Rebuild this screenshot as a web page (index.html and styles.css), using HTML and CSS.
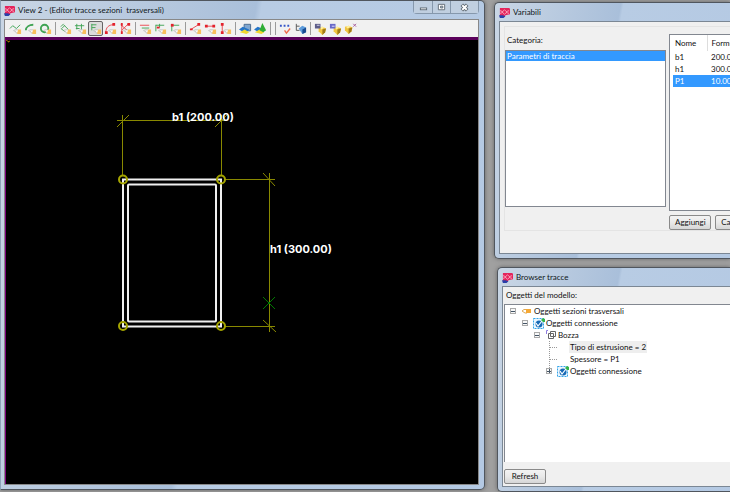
FILE: index.html
```html
<!DOCTYPE html>
<html lang="it">
<head>
<meta charset="utf-8">
<title>Editor tracce sezioni trasversali</title>
<link rel="stylesheet" href="styles.css">
</head>
<body>
<svg class="symbols" aria-hidden="true">
  <symbol id="app" viewBox="0 0 12 12">
    <path fill="#e4245b" d="M1 1h10l1 1v6l-5 1-1 2H1z"/>
    <path fill="#2a3fa8" d="M0 9h4l3 1-2 2H1z"/>
    <path fill="none" stroke="#ffc4d4" stroke-width=".8" d="M1 4l3 1 2-2 2 2 3-1M1 7l3-1 2 2 2-2 3 1M4 5v1M8 5v1"/>
  </symbol>
  <symbol id="hand" viewBox="0 0 14 14">
    <path fill="#fff" stroke="#aaa" stroke-width=".7" d="M10 8.500H6l-1 1 2 .5 1 2h2"/>
    <path fill="#f7bf5e" d="M10 8h3v5h-4v-2z"/>
  </symbol>
  <symbol id="gem" viewBox="0 0 14 14">
    <path fill="#f0c440" d="M5 6l4-1 4 2-1 4-3 3-4-4z"/>
    <path fill="#a07a18" d="M9 8l4-1-1 4-3 3z"/>
    <path fill="#fff0a0" d="M6 6l3-1 2 1-3 2z"/>
  </symbol>
  <symbol id="link" viewBox="0 0 12 12">
    <rect x=".5" y="1.500" width="10" height="10" fill="#eaf6ff" stroke="#35a5e8" stroke-dasharray="2 1"/>
    <circle cx="6" cy="7" r="3.500" fill="#1769b5"/>
    <path fill="none" stroke="#fff" stroke-width="1.200" d="M3 6l2 3 4-5"/>
    <path fill="#35b34a" d="M8 3l2-2 2 1v3l-2 0z"/>
  </symbol>
</svg>

<main class="desktop">
  <section class="window editor" aria-label="View 2">
    <header class="titlebar">
      <svg class="app-icon"><use href="#app"/></svg>
      <h1>View 2 - (Editor tracce sezioni&nbsp; trasversali)</h1>
      <div class="controls">
        <button aria-label="Riduci a icona"><svg viewBox="0 0 10 10"><rect x="1.500" y="5.500" width="7" height="2" fill="#fff" stroke="#5b6670"/></svg></button>
        <button aria-label="Ingrandisci"><svg viewBox="0 0 10 10"><path fill="#fff" fill-rule="evenodd" stroke="#5b6670" d="M1.500 1.500h7v6h-7zM4 3.500h2.500v2H4z"/></svg></button>
        <button aria-label="Chiudi"><svg viewBox="0 0 10 10"><path stroke="#5b6670" stroke-width="4" d="M2 2l6 6M8 2L2 8"/><path stroke="#fff" stroke-width="2" d="M2.500 2.500l5 5M7.500 2.500l-5 5"/></svg></button>
      </div>
    </header>
    <div class="client">
      <div class="toolbar" role="toolbar">
        <div class="group">
          <button aria-label="Polilinea"><svg viewBox="0 0 14 14"><path class="green" d="M1 7l3-3 4 3 4-4"/><use href="#hand"/></svg></button>
          <button aria-label="Arco"><svg viewBox="0 0 14 14"><path class="green thick" d="M2 9c0-4 4-6 8-6"/><use href="#hand"/></svg></button>
          <button aria-label="Cerchio"><svg viewBox="0 0 14 14"><circle class="green thick" cx="6" cy="7" r="4"/><use href="#hand"/></svg></button>
        </div>
        <div class="group">
          <button aria-label="Vincolo parallelo"><svg viewBox="0 0 14 14"><path class="green" d="M2 7l4 3M5 3l5 5M2 5l3-3M3 7l3-3"/><use href="#hand"/></svg></button>
          <button aria-label="Vincolo verticale"><svg viewBox="0 0 14 14"><path class="green" d="M3 2v6M8 2v6M1 4h10M2 7h4"/><use href="#hand"/></svg></button>
          <button class="pressed" aria-label="Vincolo orizzontale" aria-pressed="true"><svg viewBox="0 0 14 14"><path class="green" d="M3 2v7M3 3h5M3 6h4"/><use href="#hand"/></svg></button>
          <button aria-label="Raccordo"><svg viewBox="0 0 14 14"><path class="red" d="M2 11c0-5 3-8 8-8"/><path class="red-fill" d="M1 10h3v3H1zM9 1h3v3H9z"/><use href="#hand"/></svg></button>
          <button aria-label="Taglia"><svg viewBox="0 0 14 14"><path class="red" d="M3 2v10M2 3l8 7M10 2L3 9"/><path class="red-fill" d="M2 1h2v3H2zM9 1h3v3H9zM2 10h2v3H2z"/><use href="#hand"/></svg></button>
        </div>
        <div class="group">
          <button aria-label="Allinea"><svg viewBox="0 0 14 14"><path class="red" d="M1 3.500h10"/><path class="green" d="M3 6.500h8"/><use href="#hand"/></svg></button>
          <button aria-label="Perpendicolare"><svg viewBox="0 0 14 14"><path class="green" d="M2 3v7M2 3.500h9M6 6V2"/><path class="red-fill" d="M3 5h3v2H3z"/><use href="#hand"/></svg></button>
          <button aria-label="Coincidente"><svg viewBox="0 0 14 14"><path class="green" d="M3 3v7M3 3.500h8"/><path class="red-fill" d="M2 2h3v3H2z"/><use href="#hand"/></svg></button>
        </div>
        <div class="group">
          <button aria-label="Distanza libera"><svg viewBox="0 0 14 14"><path class="red" d="M2 8l8-5"/><path class="red-fill" d="M1 7h3v2H1zM9 1h3v3H9z"/><use href="#hand"/></svg></button>
          <button aria-label="Distanza orizzontale"><svg viewBox="0 0 14 14"><path class="red" d="M2 4.500h9"/><path class="red-fill" d="M1 3h3v3H1zM9 3h3v3H9z"/><use href="#hand"/></svg></button>
          <button aria-label="Distanza verticale"><svg viewBox="0 0 14 14"><path class="red" d="M3.500 3v9"/><path class="red-fill" d="M2 1h3v3H2zM2 10h3v3H2z"/><use href="#hand"/></svg></button>
        </div>
        <div class="group">
          <button aria-label="Piano"><svg viewBox="0 0 14 14"><path fill="#7fa6d0" stroke="#49698c" d="M5.500 2.500h7v7h-7z"/><path fill="#2474c8" d="M0 8l4-3 7 3-4 4z"/><path fill="#f1d72e" d="M1 11l5-3 5 3-3 2z"/></svg></button>
          <button aria-label="Solido"><svg viewBox="0 0 14 14"><path fill="#2474c8" d="M0 8l4-3 7 3-4 4z"/><path fill="#f1d72e" d="M1 11l5-3 5 3-3 2z"/><path fill="#2fae35" d="M6 9l3-8 4 8-3 2z"/></svg></button>
        </div>
        <div class="group empty"></div>
        <div class="group">
          <button aria-label="Punti"><svg viewBox="0 0 14 14"><path class="blue-fill" d="M1 3h2v2H1zM5 3h2v2H5zM9 3h2v2H9z"/><path fill="none" stroke="#ef6b4a" stroke-width="1.500" d="M6 9l2 3 4-5"/></svg></button>
          <button aria-label="Albero"><svg viewBox="0 0 14 14"><path fill="none" stroke="#555" d="M2.500 2v7H6M2.500 4.500H6"/><path fill="#5d9cdb" d="M5 7l4-3 4 2v5l-4 2z"/><path fill="#174a91" d="M9 8l4-2v5l-4 2z"/></svg></button>
        </div>
        <div class="group">
          <button aria-label="Salva"><svg viewBox="0 0 14 14"><use href="#gem"/><path fill="#5c5c88" d="M1 2h6v5H1z"/><path fill="#d8d8e8" d="M3 3h3v1H3z"/></svg></button>
          <button aria-label="Salva con nome"><svg viewBox="0 0 14 14"><use href="#gem"/><path fill="#6868c8" d="M1 2h6v5H1z"/><path fill="#e8e8ff" d="M3 4h3v1H3z"/></svg></button>
          <button aria-label="Elimina"><svg viewBox="0 0 14 14"><use href="#gem" x="-4" y="-1" width="14" height="14"/><path fill="none" stroke="#a35698" d="M10 2l3 3M13 2l-3 3"/></svg></button>
        </div>
      </div>
      <div class="viewport">
        <svg class="drawing" viewBox="6 40 340 300" width="340" height="300" role="img" aria-label="Sezione b1 per h1">
          <path class="axis" d="M6 40l3 2M10 41l-2 1"/>
          <g class="section">
            <rect x="123" y="179.500" width="98" height="147"/>
            <rect x="128" y="184.500" width="88" height="137" rx="1"/>
          </g>
          <g class="dimension">
            <path d="M117 120.500h110M122.500 115v60M221.500 115v60M225 179.500h50M225 326.500h50M269.500 173v159"/>
            <path d="M117 127l12-12M215 127l12-12M263 173l12 13M263 320l13 12"/>
          </g>
          <g class="handles">
            <circle cx="123" cy="179.500" r="4"/>
            <circle cx="221" cy="179.500" r="4"/>
            <circle cx="123" cy="326" r="4"/>
            <circle cx="221" cy="326" r="4"/>
          </g>
          <path class="origin" d="M263 297l12 12M275 297l-12 12"/>
          <text x="172" y="121">b1 (200.00)</text>
          <text x="270" y="253">h1 (300.00)</text>
        </svg>
      </div>
    </div>
  </section>

  <div class="side">
    <section class="window variables" aria-label="Variabili">
      <header class="titlebar">
        <svg class="app-icon"><use href="#app"/></svg>
        <h2>Variabili</h2>
      </header>
      <div class="client">
        <div class="panel">
          <div class="category">
            <label for="category">Categoria:</label>
            <select id="category" size="2">
              <option selected>Parametri di traccia</option>
            </select>
          </div>
          <div class="values">
            <div class="table-box">
              <table>
                <thead><tr><th>Nome</th><th>Formula</th></tr></thead>
                <tbody>
                  <tr><td>b1</td><td>200.00</td></tr>
                  <tr><td>h1</td><td>300.00</td></tr>
                  <tr class="selected"><td>P1</td><td>10.00</td></tr>
                </tbody>
              </table>
            </div>
            <div class="actions">
              <button class="push">Aggiungi</button>
              <button class="push">Cancella</button>
            </div>
          </div>
        </div>
      </div>
    </section>

    <section class="window browser" aria-label="Browser tracce">
      <header class="titlebar">
        <svg class="app-icon"><use href="#app"/></svg>
        <h2>Browser tracce</h2>
      </header>
      <div class="client">
        <p class="caption">Oggetti del modello:</p>
        <div class="tree">
          <ul>
            <li>
              <div class="node"><button class="toggle" aria-label="Comprimi"></button><svg class="node-icon" viewBox="0 0 12 12"><path fill="#fff" stroke="#e0aa55" d="M5 4.500H3l-2 1.500 3 2h2"/><path fill="#f5a835" d="M5 4h5v4H5z"/></svg><span>Oggetti sezioni trasversali</span></div>
              <ul>
                <li>
                  <div class="node"><button class="toggle" aria-label="Comprimi"></button><svg class="node-icon"><use href="#link"/></svg><span>Oggetti connessione</span></div>
                  <ul>
                    <li>
                      <div class="node"><button class="toggle" aria-label="Comprimi"></button><svg class="node-icon" viewBox="0 0 12 12"><path fill="none" stroke="#8f7de0" d="M1.500 5V1.500H3"/><path fill="#fff" stroke="#666" d="M5.500 2.500h5v5h-5zM3.500 4.500h5v5h-5z"/></svg><span>Bozza</span></div>
                      <ul class="branch">
                        <li><div class="node leaf"><span class="current">Tipo di estrusione = 2</span></div></li>
                        <li><div class="node leaf"><span>Spessore = P1</span></div></li>
                        <li><div class="node"><button class="toggle closed" aria-label="Espandi"></button><svg class="node-icon"><use href="#link"/></svg><span>Oggetti connessione</span></div></li>
                      </ul>
                    </li>
                  </ul>
                </li>
              </ul>
            </li>
          </ul>
        </div>
        <div class="footer"><button class="push">Refresh</button></div>
      </div>
    </section>
  </div>
</main>
</body>
</html>
```
FILE: styles.css
```css
* { box-sizing: border-box; }

body {
  margin: 0;
  background: #a0a0a0;
  color: #111;
  font: 8px/12px Lato, "Open Sans", sans-serif;
}

h1, h2, p, ul { margin: 0; padding: 0; font-size: inherit; font-weight: normal; }
ul { list-style: none; }
button, select { margin: 0; padding: 0; font: inherit; color: inherit; }
.symbols { position: absolute; width: 0; height: 0; }

.desktop {
  display: grid;
  grid-template-columns: 485fr 236fr;
  gap: 9px;
  height: 100vh;
  overflow: hidden;
}

.side {
  display: grid;
  grid-template-rows: 257fr 225fr;
  gap: 8px;
  min-width: 0;
  padding-top: 2px;
}

.window {
  display: flex;
  flex-direction: column;
  min-width: 0;
  min-height: 0;
  padding: 0 4px 4px;
  border: 1px solid #50565e;
  border-radius: 5px;
  background: linear-gradient(100deg, #c9d6e5, #a9bfda 45%, #b8cce4 46%, #b4c9e3);
  box-shadow: 0 0 4px #666;
}

.titlebar {
  display: flex;
  flex: none;
  align-items: center;
  gap: 3px;
  height: 18px;
  color: #101820;
}
.app-icon { width: 11px; height: 11px; }

.client {
  display: flex;
  flex: 1;
  flex-direction: column;
  min-height: 0;
  border: 1px solid #7b8794;
  background: #f0f0f0;
}

/* Editor window */
.editor { margin-bottom: 2px; padding: 0 5px 4px 3px; border-left-color: #8fa3b8; border-radius: 0 5px 5px 0; }
.editor .client { border-color: #888; }

.controls {
  display: flex;
  align-self: flex-start;
  margin-left: auto;
  border: 1px solid #8698ac;
  border-top: 0;
  border-radius: 0 0 4px 4px;
}
.controls button {
  display: grid;
  place-items: center;
  width: 18px;
  height: 12px;
  border: 0;
  background: #c0cfe0;
}
.controls button + button { border-left: 1px solid #8698ac; }
.controls button:last-child { width: 28px; }
.controls svg { width: 9px; height: 9px; }

.toolbar {
  display: flex;
  flex: none;
  align-items: center;
  height: 17px;
  padding-left: 3px;
  background: #f1f1f1;
}
.group { display: flex; }
.group + .group::before {
  width: 1px;
  height: 13px;
  margin: 1px 2px;
  background: #9a9a9a;
  content: "";
}
.group button {
  display: grid;
  place-items: center;
  width: 15px;
  height: 15px;
  border: 1px solid transparent;
  border-radius: 2px;
  background: none;
}
.group .pressed { border-color: #666; background: #dcdcdc; }
.group svg { width: 13px; height: 13px; }
.green { fill: none; stroke: #3fa353; }
.red { fill: none; stroke: #e94850; }
.thick { stroke-width: 2; }
.red-fill { fill: #e3222c; }
.blue-fill { fill: #3554c8; }

.viewport {
  flex: 1;
  min-height: 0;
  overflow: hidden;
  border-top: 3px solid #5b005b;
  border-left: 1px solid #800080;
  background: #000;
}
.drawing { display: block; }
.drawing text { fill: #fff; font: bold 11px Inter, "Liberation Sans", sans-serif; }
.section { fill: none; stroke: #f0f0f0; stroke-width: 2; }
.dimension { fill: none; stroke: #898900; }
.handles { fill: none; stroke: #a5a500; stroke-width: 2; }
.origin { stroke: #007a00; }
.axis { stroke: #a07000; }

/* Windows that run past the right edge */
.side .window {
  padding-right: 0;
  border-right: 0;
  border-radius: 5px 0 0 5px;
}
.side .client { border-right: 0; }

.push {
  min-width: 42px;
  height: 15px;
  padding: 0 5px;
  border: 1px solid #8a8a8a;
  border-radius: 2px;
  background: linear-gradient(#f3f3f3, #e9e9e9 50%, #d6d6d6);
  line-height: 13px;
}

.variables .client { padding: 4px 0 22px 4px; }
.panel {
  display: flex;
  flex: 1;
  gap: 3px;
  min-height: 0;
  border: 1px solid #e4e4e4;
  border-right: 0;
}
.category {
  display: flex;
  flex: none;
  flex-direction: column;
  width: 161px;
  padding: 7px 0 23px;
}
.category label { padding: 0 2px 4px; }
.category select {
  flex: 1;
  padding: 0;
  overflow: hidden;
  border: 1px solid #828790;
  border-radius: 0;
  background: #fff;
}
.category option { min-height: 10px; padding: 0 1px; line-height: 10px; }
.category option:checked { background: #39f linear-gradient(#39f, #39f); color: #fff; }

.values { display: flex; flex: 1; flex-direction: column; min-width: 0; padding-top: 7px; }
.table-box {
  flex: 1;
  overflow: hidden;
  padding-left: 3px;
  border: 1px solid #828790;
  border-right: 0;
  background: #fff;
}
table { width: 100px; border-collapse: collapse; table-layout: fixed; }
th, td { height: 12px; padding: 0 0 0 2px; text-align: left; font-weight: normal; white-space: nowrap; }
th { height: 16px; }
th:first-child { width: 34px; }
th + th, td + td { padding-left: 4px; }
th + th { border-left: 1px solid #ddd; }
.selected { background: #39f; color: #fff; }
.actions { display: flex; gap: 4px; margin-top: 4px; }

.browser { margin-left: 3px; }
.browser .client { padding-left: 1px; }
.caption { padding: 2px 2px 3px; }
.tree {
  flex: 1;
  overflow: hidden;
  min-height: 0;
  padding-left: 5px;
  border: 1px solid #828790;
  border-width: 1px 0 0 1px;
  background: #fff;
}
.tree ul ul { padding-left: 12px; }
.node { display: flex; align-items: center; height: 12px; white-space: nowrap; }
.toggle {
  display: grid;
  flex: none;
  place-items: center;
  width: 6px;
  height: 6px;
  border: 1px solid #aaa;
  background: linear-gradient(#456, #456) center / 4px 1px no-repeat #f8f8f8;
}
.toggle.closed {
  background: linear-gradient(#456, #456) center / 4px 1px no-repeat,
    linear-gradient(#456, #456) center / 1px 4px no-repeat #f8f8f8;
}
.toggle + .node-icon { margin: 0 1px 0 5px; }
.node-icon { flex: none; width: 12px; height: 12px; }
.leaf::before { width: 8px; margin: 0 13px 0 3px; border-top: 1px dotted #999; content: ""; }
.current { margin: 0 -1px; padding: 0 1px; background: #eee; }
.branch { background: repeating-linear-gradient(#999 0 1px, #fff 1px 2px) 15px 0 / 1px 28px no-repeat; }

.footer { padding: 7px 0 2px; }
```
